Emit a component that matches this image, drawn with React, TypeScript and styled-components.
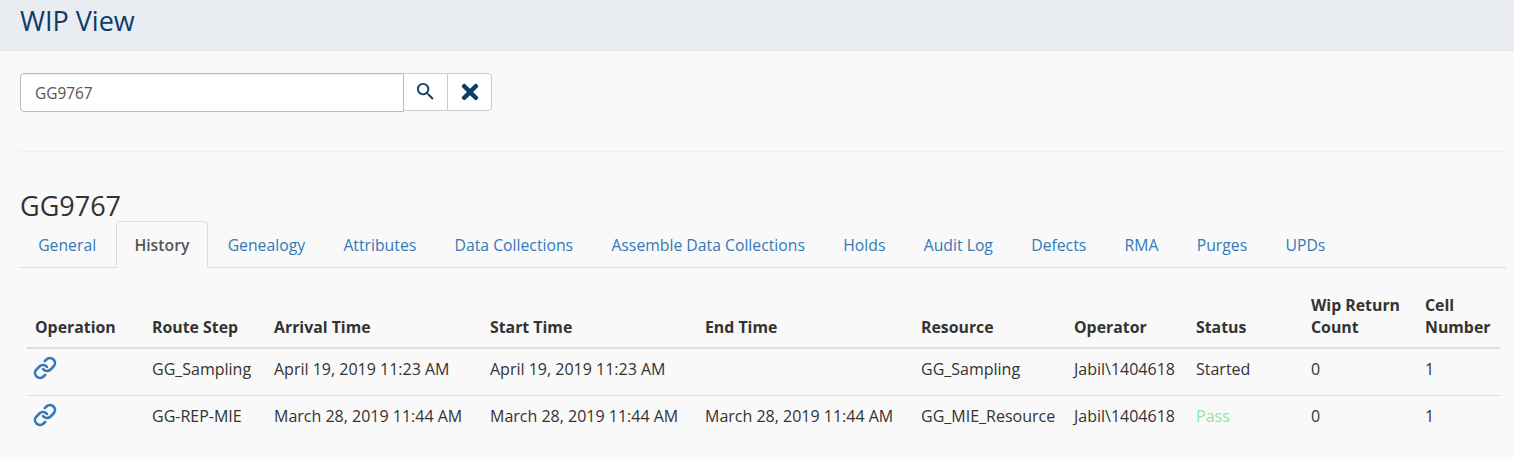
import React from "react";
import styled, { createGlobalStyle } from "styled-components";
import { FaTimes } from "react-icons/fa";
import { MdSearch } from "react-icons/md";
import { Link as ChainLink } from "lucide-react";

const Global = createGlobalStyle`
  html, body { margin: 0; padding: 0; background: #f9f9f9; }
  body { font-family: "Open Sans", "Liberation Sans", sans-serif; font-size: 16px; color: #333; overflow: hidden; }
  * { box-sizing: border-box; }
`;

const Header = styled.header`
  height: 51px;
  background: #e9ecf1;
  border-bottom: 1px solid #dfe3ec;
  padding-left: 20px;
`;
const Title = styled.h1`
  margin: 0;
  font-size: 27px;
  font-weight: 400;
  line-height: 42px;
  color: #0a3d6b;
`;
const Content = styled.main`
  padding: 22px 8px 0 20px;
`;
const SearchBar = styled.div`
  display: flex;
  align-items: flex-start;
  height: 39px;
`;
const SearchInput = styled.div`
  width: 384px;
  height: 39px;
  background: #fff;
  border: 1px solid #bbb;
  border-radius: 4px 0 0 4px;
  padding: 1px 0 0 14px;
  line-height: 37px;
  font-size: 15.4px;
  color: #555;
  box-shadow: inset 0 1px 1px rgba(0,0,0,.075);
`;
const IconButton = styled.div<{ $last?: boolean }>`
  width: ${p => (p.$last ? 45 : 44)}px;
  height: 38px;
  margin-left: ${p => (p.$last ? -1 : 0)}px;
  padding-bottom: 1px;
  background: #fff;
  border: 1px solid #ccc;
  border-left: ${p => (p.$last ? "1px solid #ccc" : "none")};
  border-radius: ${p => (p.$last ? "0 4px 4px 0" : "0")};
  display: flex;
  align-items: center;
  justify-content: center;
  color: #0a3d6b;
`;
const Rule = styled.hr`
  margin: 39px 0 0;
  border: 0;
  border-top: 1px solid #eee;
`;
const Serial = styled.h2`
  margin: 39px 0 0;
  font-size: 27px;
  font-weight: 400;
  line-height: 30px;
  color: #333;
`;
const Tabs = styled.nav`
  display: flex;
  height: 47px;
  border-bottom: 1px solid #ddd;
`;
const Tab = styled.a<{ $active?: boolean }>`
  height: 47px;
  padding: 0 17.15px;
  margin-right: 2px;
  font-size: 15.75px;
  line-height: 47px;
  color: ${p => (p.$active ? "#555" : "#337ab7")};
  font-weight: ${p => (p.$active ? 600 : 400)};
  background: ${p => (p.$active ? "#f9f9f9" : "transparent")};
  border: 1px solid ${p => (p.$active ? "#ddd" : "transparent")};
  border-bottom-color: ${p => (p.$active ? "#f9f9f9" : "transparent")};
  border-radius: 4px 4px 0 0;
`;
const TableWrap = styled.div`
  padding: 26px 6px 0 7px;
`;
const Table = styled.table`
  width: 1473px;
  table-layout: fixed;
  border-collapse: collapse;
`;
const Th = styled.th`
  padding: 0 8px 9px;
  text-align: left;
  vertical-align: bottom;
  font-size: 15.85px;
  font-weight: 700;
  line-height: 22px;
  color: #333;
  border-bottom: 2px solid #ddd;
`;
const Td = styled.td`
  height: 47px;
  padding: 0 8px 6px;
  font-size: 16px;
  line-height: 22px;
  color: #333;
  white-space: nowrap;
  border-bottom: 1px solid #ddd;
  tr:last-child > & { border-bottom: 0; }
`;
const LinkIcon = styled(ChainLink)`
  display: block;
  width: 24px;
  height: 24px;
  margin: -2px 0 0 -2px;
  color: #337ab7;
`;
const Status = styled.span<{ $pass?: boolean }>`
  color: ${p => (p.$pass ? "#8ee88e" : "#333")};
`;

const tabs = ["General", "History", "Genealogy", "Attributes", "Data Collections", "Assemble Data Collections", "Holds", "Audit Log", "Defects", "RMA", "Purges", "UPDs"];
const widths = [117, 122, 216, 215, 216, 153, 122, 115, 114, 83];
const heads = ["Operation", "Route Step", "Arrival Time", "Start Time", "End Time", "Resource", "Operator", "Status", "Wip Return Count", "Cell Number"];
const rows = [
  ["GG_Sampling", "April 19, 2019 11:23 AM", "April 19, 2019 11:23 AM", "", "GG_Sampling", "Jabil\\1404618", "Started", "0", "1"],
  ["GG-REP-MIE", "March 28, 2019 11:44 AM", "March 28, 2019 11:44 AM", "March 28, 2019 11:44 AM", "GG_MIE_Resource", "Jabil\\1404618", "Pass", "0", "1"],
];

export default function App() {
  return (
    <>
      <Global />
      <Header><Title>WIP View</Title></Header>
      <Content>
        <SearchBar>
          <SearchInput>GG9767</SearchInput>
          <IconButton><MdSearch size={23} /></IconButton>
          <IconButton $last><FaTimes size={24} /></IconButton>
        </SearchBar>
        <Rule />
        <Serial>GG9767</Serial>
        <Tabs>
          {tabs.map(t => <Tab key={t} $active={t === "History"}>{t}</Tab>)}
        </Tabs>
        <TableWrap>
          <Table>
            <colgroup>{widths.map((w, i) => <col key={i} style={{ width: w }} />)}</colgroup>
            <thead><tr>{heads.map(h => <Th key={h}>{h}</Th>)}</tr></thead>
            <tbody>
              {rows.map(r => (
                <tr key={r[0]}>
                  <Td><LinkIcon strokeWidth={2.6} /></Td>
                  {r.map((c, i) => <Td key={i}>{i === 6 ? <Status $pass={c === "Pass"}>{c}</Status> : c}</Td>)}
                </tr>
              ))}
            </tbody>
          </Table>
        </TableWrap>
      </Content>
    </>
  );
}
